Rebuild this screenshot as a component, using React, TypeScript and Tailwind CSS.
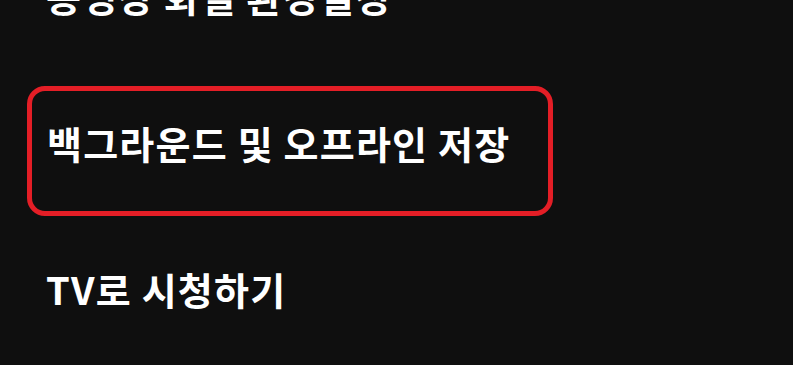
const items = ['백그라운드 및 오프라인 저장', 'TV로 시청하기'];

export default function App() {
  return (
    <div className="w-[793px] h-[365px] overflow-hidden bg-[#0f0f0f] text-white font-bold text-[38px] tracking-[1.2px] leading-none font-['Noto_Sans_CJK_KR','Noto_Sans',sans-serif]">
      <div className="-mt-[34px] h-[60px] flex items-center pl-[46px]">동영상 화질 환경설정</div>
      <div className="mt-[60px] ml-[27px] w-[526px] h-[130px] border-[5px] border-[#e41e26] rounded-[18px] flex items-center pl-[15px] pb-[16px]">
        {items[0]}
      </div>
      <div className="mt-[43px] h-[60px] flex items-center pl-[46px]">{items[1]}</div>
    </div>
  );
}
